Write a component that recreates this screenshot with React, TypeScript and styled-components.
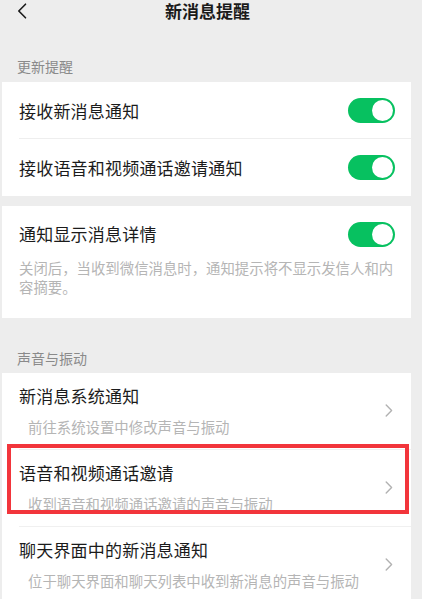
import React from "react";
import styled, { createGlobalStyle } from "styled-components";

const Global = createGlobalStyle`
  html, body {
    margin: 0;
    padding: 0;
    background: #ededed;
  }
  body {
    font-family: "Noto Sans CJK SC", "Noto Sans", sans-serif;
    -webkit-font-smoothing: antialiased;
  }
`;

const Page = styled.div`
  width: 422px;
  height: 599px;
  overflow: hidden;
  background: #ededed;
  padding: 0 11px 0 2px;
  box-sizing: border-box;
`;

const Header = styled.header`
  position: relative;
  height: 22px;
  box-sizing: border-box;
  padding-top: 1px;
  display: flex;
  justify-content: center;
`;

const BackButton = styled.div`
  position: absolute;
  left: 14px;
  top: 3px;
  width: 12px;
  height: 16px;
  display: flex;
`;

const HeaderTitle = styled.h1`
  margin: 0 0 0 2px;
  font-size: 17px;
  font-weight: 700;
  color: #1a1a1a;
  line-height: 20px;
  white-space: nowrap;
`;

const SectionTitle = styled.div<{ $top: number; $bottom: number }>`
  padding: ${(p) => p.$top}px 15px ${(p) => p.$bottom}px;
  font-size: 14px;
  line-height: 20px;
  color: #8a8a8a;
`;

const Card = styled.section<{ $gap?: number }>`
  background: #ffffff;
  margin-bottom: ${(p) => p.$gap ?? 0}px;
`;

const ToggleRow = styled.div<{ $divider?: boolean }>`
  position: relative;
  height: 57px;
  display: flex;
  align-items: center;
  justify-content: space-between;
  padding: 0 16px 0 17px;
  &::after {
    content: "";
    display: ${(p) => (p.$divider ? "block" : "none")};
    position: absolute;
    left: 17px;
    right: 0;
    bottom: 0;
    height: 1px;
    background: #eeeeee;
  }
`;

const Title = styled.div`
  font-size: 17px;
  line-height: 24px;
  color: #1b1b1b;
  letter-spacing: 0.2px;
`;

const DetailBlock = styled.div`
  padding: 16px 16px 22px 17px;
`;

const DetailTop = styled.div`
  display: flex;
  align-items: center;
  justify-content: space-between;
  height: 24px;
`;

const Desc = styled.div<{ $indent?: number; $gap: number }>`
  margin-top: ${(p) => p.$gap}px;
  padding-left: ${(p) => p.$indent ?? 0}px;
  font-size: 14.4px;
  line-height: 19px;
  color: #b5b5b5;
`;

const Switch = styled.div`
  width: 47px;
  height: 25px;
  border-radius: 13px;
  background: #07c160;
  position: relative;
  flex-shrink: 0;
`;

const Knob = styled.span`
  position: absolute;
  right: 2px;
  top: 2px;
  width: 21px;
  height: 21px;
  border-radius: 50%;
  background: #ffffff;
`;

const LinkRow = styled.div<{ $divider?: boolean }>`
  position: relative;
  height: 77px;
  box-sizing: border-box;
  display: flex;
  align-items: center;
  justify-content: space-between;
  padding: 0 18px 0 17px;
  &::after {
    content: "";
    display: ${(p) => (p.$divider ? "block" : "none")};
    position: absolute;
    left: 17px;
    right: 0;
    bottom: 0;
    height: 1px;
    background: #f0f0f0;
  }
`;

const LinkText = styled.div`
  align-self: flex-start;
  display: flex;
  flex-direction: column;
  padding-top: 11px;
`;

const Chevron = styled.div`
  width: 8px;
  height: 13px;
  display: flex;
  flex-shrink: 0;
  margin-top: -2px;
`;

const Highlight = styled.div`
  position: absolute;
  left: 5px;
  right: 2px;
  top: -6px;
  bottom: 13px;
  border: 4px solid #f2353b;
  pointer-events: none;
`;

const Toggle = () => (
  <Switch>
    <Knob />
  </Switch>
);

const Arrow = () => (
  <Chevron>
    <svg width="8" height="13" viewBox="0 0 8 13">
      <path d="M1.2 1 L6.6 6.5 L1.2 12" fill="none" stroke="#b2b2b2" strokeWidth="1.4" strokeLinecap="round" strokeLinejoin="round" />
    </svg>
  </Chevron>
);

type LinkItem = { title: string; desc: string; highlight?: boolean };

const links: LinkItem[] = [
  { title: "新消息系统通知", desc: "前往系统设置中修改声音与振动" },
  { title: "语音和视频通话邀请", desc: "收到语音和视频通话邀请的声音与振动", highlight: true },
  { title: "聊天界面中的新消息通知", desc: "位于聊天界面和聊天列表中收到新消息的声音与振动" },
];

export default function App() {
  return (
    <>
      <Global />
      <Page>
        <Header>
          <BackButton>
            <svg width="12" height="16" viewBox="0 0 12 16">
              <path d="M9.5 1.2 L2.8 8 L9.5 14.8" fill="none" stroke="#1a1a1a" strokeWidth="1.6" strokeLinecap="round" strokeLinejoin="round" />
            </svg>
          </BackButton>
          <HeaderTitle>新消息提醒</HeaderTitle>
        </Header>

        <SectionTitle $top={34} $bottom={6}>更新提醒</SectionTitle>
        <Card $gap={10}>
          <ToggleRow $divider>
            <Title>接收新消息通知</Title>
            <Toggle />
          </ToggleRow>
          <ToggleRow>
            <Title>接收语音和视频通话邀请通知</Title>
            <Toggle />
          </ToggleRow>
        </Card>

        <Card>
          <DetailBlock>
            <DetailTop>
              <Title>通知显示消息详情</Title>
              <Toggle />
            </DetailTop>
            <Desc $gap={12}>关闭后，当收到微信消息时，通知提示将不显示发信人和内容摘要。</Desc>
          </DetailBlock>
        </Card>

        <SectionTitle $top={30} $bottom={5}>声音与振动</SectionTitle>
        <Card>
          {links.map((item, i) => (
            <LinkRow key={item.title} $divider={i < links.length - 1}>
              <LinkText>
                <Title>{item.title}</Title>
                <Desc $gap={9} $indent={9}>{item.desc}</Desc>
              </LinkText>
              <Arrow />
              {item.highlight && <Highlight />}
            </LinkRow>
          ))}
        </Card>
      </Page>
    </>
  );
}
